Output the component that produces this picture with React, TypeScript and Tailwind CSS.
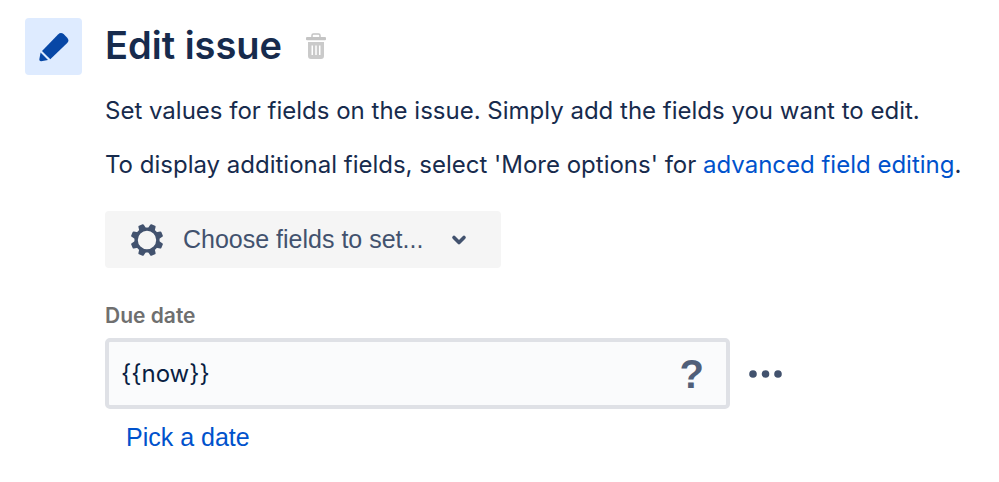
import React from "react";

function PencilIcon() {
  return (
    <svg width="32" height="32" viewBox="0 0 32 32" fill="#0747a6" aria-hidden="true">
      <path d="M4 20 20 3.500q2.800-2.700 5.600-.4l3.600 3.600q2.500 2.800 0 5.400L12.300 28.300z" />
      <path d="m2.600 21.600 7.400 7.400-6.800 1.300q-2 .1-1.900-1.800z" />
    </svg>
  );
}

function TrashIcon() {
  return (
    <svg width="20" height="26" viewBox="0 0 20 26" aria-hidden="true">
      <path d="M6 4V2.400Q6 1 7.400 1h5.200Q14 1 14 2.400V4" fill="none" stroke="#c4c4c4" strokeWidth="1.500" />
      <rect y="4" width="20" height="3.300" rx="1" fill="#c4c4c4" />
      <path fill="#cacaca" fillRule="evenodd" d="M2 9h16v14q0 3-3 3H5q-3 0-3-3zM5.500 12.500v9.500H7v-9.500zm3.750 0v9.500h1.500v-9.500zm3.750 0v9.500h1.500v-9.500z" />
    </svg>
  );
}

const teeth = [22.5, 67.5, 112.5, 157.5, 202.5, 247.5, 292.5, 337.5];

function GearIcon() {
  return (
    <svg width="32" height="32" viewBox="-16 -16 32 32" aria-hidden="true">
      <circle r="10.900" fill="none" stroke="#42526e" strokeWidth="3.400" />
      {teeth.map((angle) => (
        <path
          key={angle}
          d="M-3.600-11.500-2.900-15.400q.2-.9 1-.9h3.800q.8 0 1 .9L3.600-11.500z"
          fill="#42526e"
          transform={`rotate(${angle})`}
        />
      ))}
    </svg>
  );
}

export default function App() {
  return (
    <main className="flex items-start gap-[23px] pt-[18px] pr-6 pl-[25px] font-[Inter,sans-serif] text-[#172b4d]">
      <div className="flex size-[57px] shrink-0 items-center justify-center rounded bg-[#deebff]">
        <PencilIcon />
      </div>
      <div className="min-w-0 flex-1">
        <header className="flex items-center gap-6 pt-1">
          <h1 className="text-[38px] leading-[46px] font-semibold">Edit issue</h1>
          <button type="button" aria-label="Delete" className="pt-0.5">
            <TrashIcon />
          </button>
        </header>
        <p className="mt-6 text-[24px] leading-[38px]">
          Set values for fields on the issue. Simply add the fields you want to edit.
        </p>
        <p className="mt-4 text-[24px] leading-[38px]">
          To display additional fields, select 'More options' for{" "}
          <a href="#" className="text-[#0052cc]">advanced field editing</a>.
        </p>
        <button
          type="button"
          className="mt-[27px] flex h-[57px] items-center rounded bg-[#f5f5f5] pr-[34px] pl-[26px] font-['Liberation_Sans',Arial,sans-serif] text-[25px] text-[#42526e]"
        >
          <GearIcon />
          <span className="ml-5">Choose fields to set...</span>
          <svg className="ml-7" width="16" height="12" viewBox="0 0 16 12" fill="none" stroke="#42526e" strokeWidth="3.600" strokeLinecap="round" strokeLinejoin="round" aria-hidden="true">
            <path d="m3 3.500 5 5 5-5" />
          </svg>
        </button>
        <label htmlFor="due-date" className="mt-8 block text-[21px] leading-[32px] font-semibold text-[#6f6f6f]">
          Due date
        </label>
        <div className="mt-1.5 flex items-center gap-[19px]">
          <div className="flex h-[71px] w-[625px] items-center rounded-[5px] border-4 border-[#dfe1e6] bg-[#fafbfc] pr-[22px] pl-3">
            <input id="due-date" type="text" defaultValue="{{now}}" className="h-full min-w-0 flex-1 bg-transparent text-[24px] text-[#091e42] outline-none" />
            <button type="button" aria-label="Help" className="font-['Liberation_Sans',Arial,sans-serif] text-[40px] leading-none font-bold text-[#505f79]">
              ?
            </button>
          </div>
          <button type="button" aria-label="More">
            <svg width="33" height="8" viewBox="0 0 33 8" fill="#42526e" aria-hidden="true">
              <circle cx="4" cy="4" r="3.800" />
              <circle cx="16.500" cy="4" r="3.800" />
              <circle cx="29" cy="4" r="3.800" />
            </svg>
          </button>
        </div>
        <a href="#" className="mt-2 ml-[21px] inline-block font-['Liberation_Sans',Arial,sans-serif] text-[25px] leading-[40px] text-[#0052cc]">
          Pick a date
        </a>
      </div>
    </main>
  );
}
